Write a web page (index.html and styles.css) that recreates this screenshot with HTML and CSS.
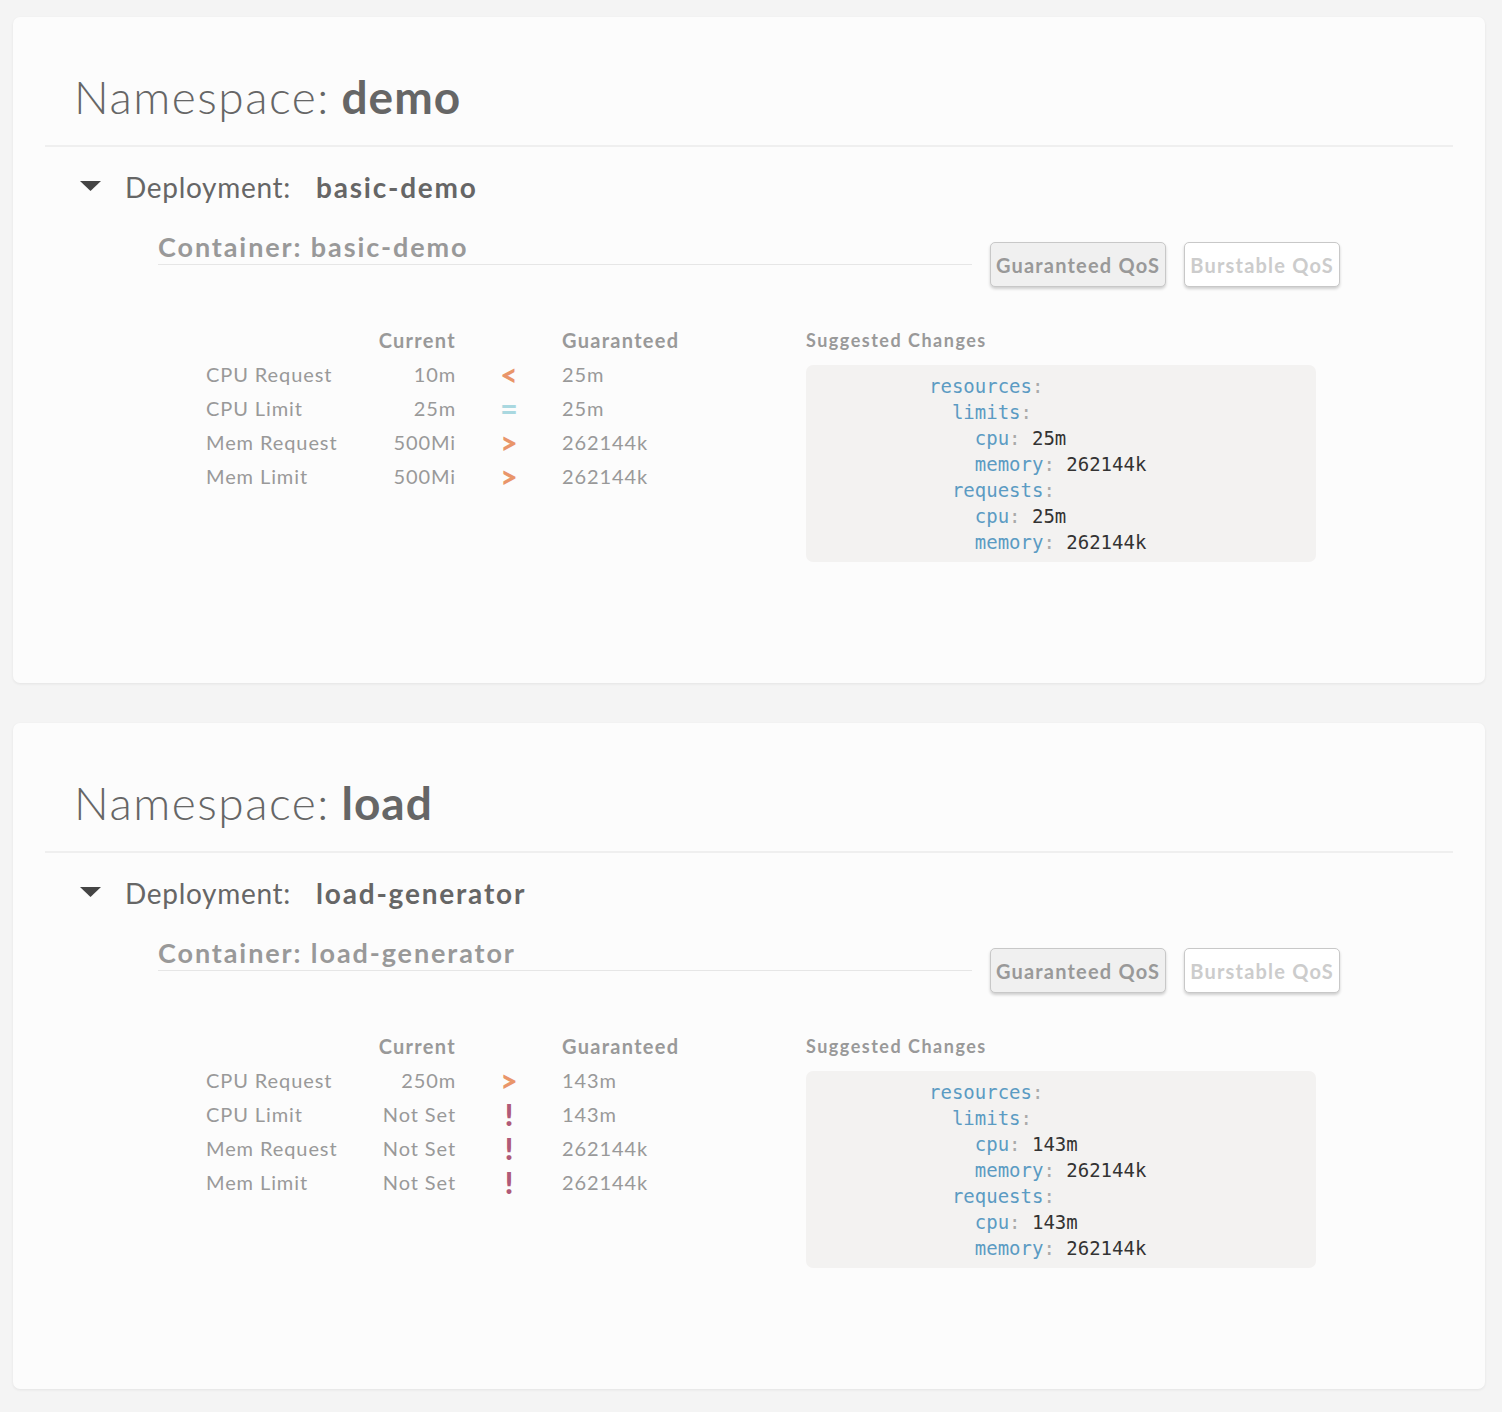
FILE: index.html
```html
<!DOCTYPE html>
<html>
<head>
<meta charset="utf-8">
<link rel="stylesheet" href="styles.css">
</head>
<body>
<div class="card">
  <h1 class="ns"><span class="ns-label">Namespace:</span> <b>demo</b></h1>
  <div class="deploy">
    <svg class="caret" width="21" height="10" viewBox="0 0 21 10"><path d="M0 0 H21 L10.5 10 Z" fill="#444"/></svg>
    <span class="deploy-label">Deployment:</span>
    <b class="deploy-name">basic-demo</b>
  </div>
  <div class="container">
    <div class="container-head">
      <div class="container-title">Container: basic-demo</div>
      <button class="qos qos-on">Guaranteed QoS</button>
      <button class="qos qos-off">Burstable QoS</button>
    </div>
    <div class="details">
      <div class="metrics">
        <div class="th"></div><div class="th cur">Current</div><div class="th"></div><div class="th">Guaranteed</div>
        <div class="lbl">CPU Request</div><div class="cur">10m</div><div class="sym lt">&lt;</div><div>25m</div>
        <div class="lbl">CPU Limit</div><div class="cur">25m</div><div class="sym eq">=</div><div>25m</div>
        <div class="lbl">Mem Request</div><div class="cur">500Mi</div><div class="sym gt">&gt;</div><div>262144k</div>
        <div class="lbl">Mem Limit</div><div class="cur">500Mi</div><div class="sym gt">&gt;</div><div>262144k</div>
      </div>
      <div class="suggest">
        <div class="suggest-title">Suggested Changes</div>
        <div class="code">
          <div class="line"><span class="k">resources</span><span class="c">:</span></div>
          <div class="line i1"><span class="k">limits</span><span class="c">:</span></div>
          <div class="line i2"><span class="k">cpu</span><span class="c">:</span><span class="v">25m</span></div>
          <div class="line i2"><span class="k">memory</span><span class="c">:</span><span class="v">262144k</span></div>
          <div class="line i1"><span class="k">requests</span><span class="c">:</span></div>
          <div class="line i2"><span class="k">cpu</span><span class="c">:</span><span class="v">25m</span></div>
          <div class="line i2"><span class="k">memory</span><span class="c">:</span><span class="v">262144k</span></div>
        </div>
      </div>
    </div>
  </div>
</div>

<div class="card">
  <h1 class="ns"><span class="ns-label">Namespace:</span> <b>load</b></h1>
  <div class="deploy">
    <svg class="caret" width="21" height="10" viewBox="0 0 21 10"><path d="M0 0 H21 L10.5 10 Z" fill="#444"/></svg>
    <span class="deploy-label">Deployment:</span>
    <b class="deploy-name">load-generator</b>
  </div>
  <div class="container">
    <div class="container-head">
      <div class="container-title">Container: load-generator</div>
      <button class="qos qos-on">Guaranteed QoS</button>
      <button class="qos qos-off">Burstable QoS</button>
    </div>
    <div class="details">
      <div class="metrics">
        <div class="th"></div><div class="th cur">Current</div><div class="th"></div><div class="th">Guaranteed</div>
        <div class="lbl">CPU Request</div><div class="cur">250m</div><div class="sym gt">&gt;</div><div>143m</div>
        <div class="lbl">CPU Limit</div><div class="cur">Not Set</div><div class="sym ex">!</div><div>143m</div>
        <div class="lbl">Mem Request</div><div class="cur">Not Set</div><div class="sym ex">!</div><div>262144k</div>
        <div class="lbl">Mem Limit</div><div class="cur">Not Set</div><div class="sym ex">!</div><div>262144k</div>
      </div>
      <div class="suggest">
        <div class="suggest-title">Suggested Changes</div>
        <div class="code">
          <div class="line"><span class="k">resources</span><span class="c">:</span></div>
          <div class="line i1"><span class="k">limits</span><span class="c">:</span></div>
          <div class="line i2"><span class="k">cpu</span><span class="c">:</span><span class="v">143m</span></div>
          <div class="line i2"><span class="k">memory</span><span class="c">:</span><span class="v">262144k</span></div>
          <div class="line i1"><span class="k">requests</span><span class="c">:</span></div>
          <div class="line i2"><span class="k">cpu</span><span class="c">:</span><span class="v">143m</span></div>
          <div class="line i2"><span class="k">memory</span><span class="c">:</span><span class="v">262144k</span></div>
        </div>
      </div>
    </div>
  </div>
</div>
</body>
</html>
```

FILE: styles.css
```css
html, body {
  margin: 0;
  padding: 0;
  background: #f4f4f4;
  font-family: Lato, "Noto Sans", sans-serif;
}
body {
  padding: 17px 17px 22px 13px;
}
.card {
  background: #fcfcfc;
  border-radius: 7px;
  box-shadow: 0 1px 3px rgba(0, 0, 0, 0.07);
  padding: 50px 32px 121px;
  margin-bottom: 40px;
}
.card:last-child {
  margin-bottom: 0;
}
.ns {
  margin: 0;
  padding: 0 0 18px 29px;
  border-bottom: 2px solid #efefef;
  font-size: 46px;
  line-height: 60px;
  color: #666;
  font-weight: 400;
}
.ns-label {
  font-weight: 300;
  letter-spacing: 1.5px;
}
.ns b {
  font-weight: 700;
  letter-spacing: 1px;
}
.deploy {
  display: flex;
  align-items: center;
  height: 40px;
  margin-top: 20px;
  padding-left: 35px;
  color: #666;
  font-size: 28px;
}
.caret {
  margin-right: 24px;
  margin-top: -2px;
}
.deploy-label {
  font-weight: 400;
  letter-spacing: 0.7px;
  margin-right: 25px;
}
.deploy-name {
  font-weight: 700;
  letter-spacing: 1.8px;
}
.container {
  margin: 23px 113px 0;
}
.container-head {
  display: flex;
  align-items: flex-start;
}
.container-title {
  flex: 1;
  font-size: 27px;
  line-height: 34px;
  font-weight: 700;
  letter-spacing: 1.9px;
  color: #999;
  border-bottom: 1px solid #e6e6e6;
}
.qos {
  margin-top: 12px;
  margin-left: 18px;
  height: 45px;
  padding: 0 5px;
  font-family: inherit;
  font-size: 20px;
  font-weight: 700;
  letter-spacing: 1.2px;
  border: 1px solid #c8c8c8;
  border-radius: 5px;
  box-shadow: 0 2px 3px rgba(0, 0, 0, 0.18);
}
.qos-on {
  background: #f0f0f0;
  color: #999;
}
.qos-off {
  background: #fff;
  color: #ccc;
}
.details {
  display: flex;
  margin-top: 36px;
  margin-left: 48px;
}
.metrics {
  width: 600px;
  display: grid;
  grid-template-columns: 150px 100px 106px 1fr;
  grid-auto-rows: 34px;
  align-items: center;
  align-content: start;
  font-size: 20px;
  letter-spacing: 0.9px;
  color: #999;
}
.th {
  font-weight: 700;
  letter-spacing: 1.3px;
}
.cur {
  text-align: right;
}
.sym {
  text-align: center;
  font-weight: 900;
  font-size: 30px;
  letter-spacing: 0;
  line-height: 34px;
}
.lt, .gt {
  color: #e9956a;
}
.eq {
  color: #a9d8e0;
}
.ex {
  color: #b05a78;
}
.suggest {
  width: 510px;
}
.suggest-title {
  font-size: 18px;
  font-weight: 700;
  letter-spacing: 1.5px;
  color: #999;
  line-height: 34px;
}
.code {
  margin-top: 8px;
  background: #f3f2f1;
  border-radius: 7px;
  padding: 8px 0 7px 123px;
  font-family: "DejaVu Sans Mono", monospace;
  font-size: 19px;
  line-height: 26px;
  color: #333;
}
.i1 {
  padding-left: 2ch;
}
.i2 {
  padding-left: 4ch;
}
.k {
  color: #5b9bc3;
}
.c {
  color: #aaa;
  margin-right: 1ch;
}
.v {
  color: #333;
}
```
